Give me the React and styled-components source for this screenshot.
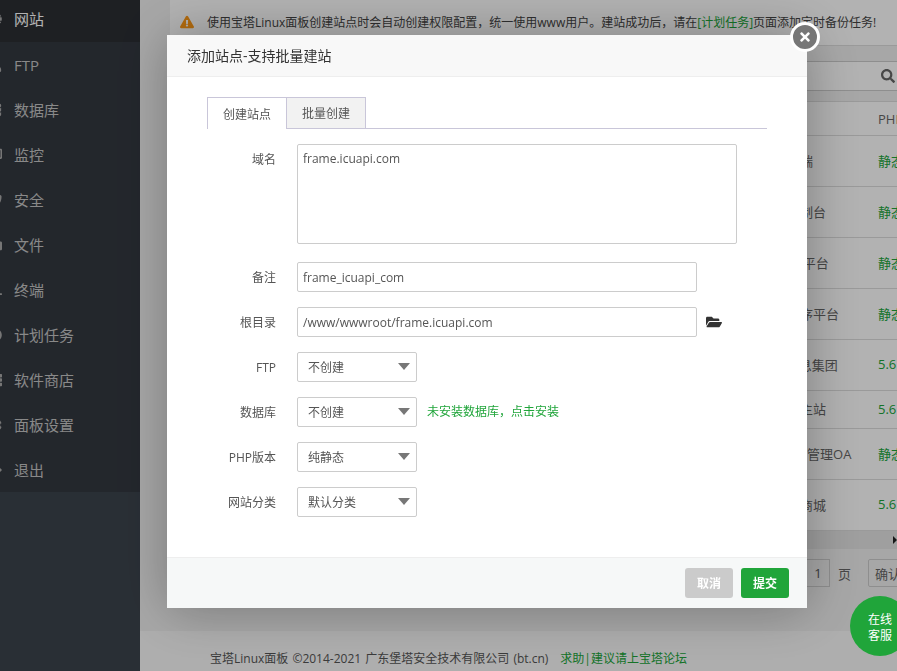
import styled, { createGlobalStyle } from "styled-components";
import {
  FaGlobe, FaUser, FaDatabase, FaDesktop, FaShieldAlt, FaFolder, FaTerminal, FaClock, FaTh, FaCog, FaSignOutAlt,
  FaExclamationTriangle, FaSearch, FaFolderOpen, FaTimes,
} from "react-icons/fa";

const GlobalStyle = createGlobalStyle`
  html, body { margin: 0; height: 100%; overflow: hidden; }
  body { font-family: "Open Sans", "Noto Sans CJK SC", sans-serif; font-size: 13px; color: #666; }
  * { box-sizing: border-box; }
`;

const Page = styled.div`
  display: flex;
  width: 897px;
  height: 671px;
  overflow: hidden;
  background: #f0f0f0;
`;

const Sidebar = styled.aside`
  width: 140px;
  flex: none;
  background: #3c444d;
`;

const Menu = styled.ul`
  list-style: none;
  margin: -3px 0 0;
  padding: 0;
  background: #333840;
`;

const MenuItem = styled.li`
  display: flex;
  align-items: center;
  gap: 12px;
  height: 45px;
  padding-bottom: ${(p) => (p.$active ? 2 : 0)}px;
  margin-left: -12px;
  font-size: 15px;
  color: ${(p) => (p.$active ? "#fff" : "#c4c4c4")};
  background: ${(p) => (p.$active ? "#2b2e33" : "transparent")};
  svg { width: 14px; height: 14px; color: #aaa; flex: none; }
`;

const Main = styled.main`
  flex: 1;
  min-width: 0;
  display: flex;
  flex-direction: column;
`;

const Content = styled.div`
  margin-left: 15px;
  padding-left: 15px;
  height: 603px;
  flex: none;
  background: #f0f0f0;
  display: flex;
  flex-direction: column;
`;

const Notice = styled.div`
  height: 46px;
  flex: none;
  display: flex;
  align-items: center;
  gap: 13px;
  padding: 0 0 2px 10px;
  background: #fff;
  border-bottom: 1px solid #ddd;
  color: #444;
  font-size: 12px;
  white-space: nowrap;
  svg { width: 14px; height: 14px; color: #ff9a16; flex: none; }
  a { color: #20a53a; }
`;

const Toolbar = styled.div`
  flex: none;
  display: flex;
  justify-content: flex-end;
  margin-top: 15px;
  height: 30px;
  background: #fff;
  border-top: 1px solid #ccc;
  border-bottom: 1px solid #ccc;
  align-items: center;
  padding-right: 2px;
  svg { width: 14px; height: 14px; color: #666; }
`;

const Table = styled.div`
  margin-top: 10px;
  border-top: 1px solid #ddd;
  background: #fff;
  flex: none;
`;

const Row = styled.div`
  display: grid;
  grid-template-columns: 591px 117px 100px;
  align-items: center;
  height: ${(p) => p.$h}px;
  padding-bottom: 2px;
  border-bottom: 1px solid #ddd;
  white-space: nowrap;
`;

const NameCell = styled.div`
  grid-column: 2;
  color: #666;
`;

const PhpCell = styled.div`
  grid-column: 3;
  margin-top: ${(p) => (p.$head ? 2 : 0)}px;
  color: ${(p) => (p.$head ? "#666" : "#20a53a")};
`;

const ScrollTrack = styled.div`
  height: 18px;
  flex: none;
  background: #e4e4e4;
  display: flex;
  align-items: center;
  justify-content: flex-end;
  &::after {
    content: "";
    border-left: 4px solid #222;
    border-top: 4px solid transparent;
    border-bottom: 4px solid transparent;
  }
`;

const Pager = styled.div`
  display: flex;
  align-items: center;
  padding: 10px 0 0 637px;
  color: #666;
`;

const PageInput = styled.div`
  width: 23px;
  height: 28px;
  flex: none;
  border: 1px solid #ccc;
  border-left: none;
  display: flex;
  align-items: center;
  justify-content: center;
  color: #555;
`;

const PageWord = styled.span`
  flex: none;
  margin: 0 17px 0 8px;
`;

const ConfirmBtn = styled.div`
  width: 60px;
  height: 28px;
  padding-left: 6px;
  border: 1px solid #ccc;
  border-radius: 2px;
  display: flex;
  align-items: center;
  flex: none;
  white-space: nowrap;
`;

const Footer = styled.footer`
  margin-top: 28px;
  height: 40px;
  flex: none;
  background: #f9f9f9;
  padding: 18px 0 0 70px;
  font-size: 12px;
  word-spacing: 1px;
  color: #555;
  white-space: nowrap;
  a { color: #20a53a; margin-left: 12px; }
`;

const Shade = styled.div`
  position: fixed;
  inset: 0;
  background: rgba(0, 0, 0, 0.3);
`;

const Modal = styled.section`
  position: fixed;
  left: 167px;
  top: 35px;
  width: 640px;
  height: 573px;
  background: #fff;
  box-shadow: 1px 1px 50px rgba(0, 0, 0, 0.3);
  display: flex;
  flex-direction: column;
`;

const ModalTitle = styled.header`
  height: 42px;
  flex: none;
  padding: 0 0 2px 20px;
  display: flex;
  align-items: center;
  background: #f8f8f8;
  border-bottom: 1px solid #eee;
  color: #333;
  font-size: 14px;
`;

const CloseBtn = styled.button`
  position: absolute;
  right: -13px;
  top: -13px;
  width: 30px;
  height: 30px;
  padding: 0;
  border: 3px solid #fff;
  border-radius: 50%;
  background: #777;
  color: #fff;
  display: flex;
  align-items: center;
  justify-content: center;
  svg { width: 14px; height: 14px; }
`;

const ModalBody = styled.div`
  flex: 1;
  padding: 20px 40px 0;
`;

const Tabs = styled.div`
  display: flex;
  height: 32px;
  border-bottom: 1px solid #c9c6d9;
`;

const Tab = styled.div`
  width: ${(p) => p.$w}px;
  height: 32px;
  display: flex;
  align-items: center;
  justify-content: center;
  font-size: 12px;
  color: #555;
  border: 1px solid #c9c6d9;
  background: ${(p) => (p.$active ? "#fff" : "#f2f2f2")};
  border-bottom: ${(p) => (p.$active ? "none" : "1px solid #c9c6d9")};
  border-left: ${(p) => (p.$active ? "1px solid #c9c6d9" : "none")};
`;

const Form = styled.div`
  display: flex;
  flex-direction: column;
  gap: 15px;
  margin-top: 15px;
`;

const Field = styled.div`
  display: flex;
  align-items: flex-start;
  min-height: 30px;
  gap: 10px;
`;

const Label = styled.label`
  width: 69px;
  height: 30px;
  margin-right: 11px;
  flex: none;
  text-align: right;
  line-height: 31px;
  font-size: 12px;
  color: #555;
`;

const TextInput = styled.input`
  width: 400px;
  height: 30px;
  padding: 0 5px;
  border: 1px solid #ccc;
  border-radius: 2px;
  font: 12px "Open Sans", "Noto Sans CJK SC", sans-serif;
  color: #555;
  outline: none;
`;

const TextArea = styled.textarea`
  display: block;
  width: 440px;
  height: 100px;
  margin-bottom: 3px;
  padding: 5px;
  border: 1px solid #ccc;
  border-radius: 2px;
  font: 12px/17px "Open Sans", "Noto Sans CJK SC", sans-serif;
  color: #555;
  outline: none;
  resize: none;
`;

const SelectBox = styled.div`
  position: relative;
  width: 120px;
  height: 30px;
  padding-left: 10px;
  display: flex;
  align-items: center;
  border: 1px solid #ccc;
  border-radius: 2px;
  font-size: 12px;
  color: #555;
  &::after {
    content: "";
    position: absolute;
    right: 6px;
    top: 10px;
    border-top: 7px solid #777;
    border-left: 6px solid transparent;
    border-right: 6px solid transparent;
  }
`;

const FolderBtn = styled.span`
  display: flex;
  align-items: center;
  height: 30px;
  margin-left: -1px;
  color: #333;
  svg { width: 16px; height: 16px; }
`;

const InstallLink = styled.a`
  line-height: 30px;
  font-size: 12px;
  color: #20a53a;
`;

const ModalFoot = styled.div`
  height: 51px;
  flex: none;
  display: flex;
  justify-content: flex-end;
  align-items: flex-start;
  gap: 8px;
  padding: 10px 18px 0 0;
  background: #f6f8f8;
  border-top: 1px solid #eee;
`;

const FootBtn = styled.button`
  width: 48px;
  height: 30px;
  padding: 0;
  border: none;
  border-radius: 3px;
  background: ${(p) => (p.$primary ? "#20a53a" : "#cbcbcb")};
  color: #fff;
  font: bold 12px "Open Sans", "Noto Sans CJK SC", sans-serif;
`;

const ChatBubble = styled.div`
  position: fixed;
  left: 850px;
  top: 596px;
  width: 60px;
  height: 60px;
  border-radius: 50%;
  background: #20a53a;
  color: #fff;
  font-size: 12px;
  line-height: 16px;
  padding: 16px 0 0 18px;
`;

const menu = [
  [FaGlobe, "网站"], [FaUser, "FTP"], [FaDatabase, "数据库"], [FaDesktop, "监控"], [FaShieldAlt, "安全"],
  [FaFolder, "文件"], [FaTerminal, "终端"], [FaClock, "计划任务"], [FaTh, "软件商店"], [FaCog, "面板设置"], [FaSignOutAlt, "退出"],
];

const sites = [
  ["官网前端", "静态", 51],
  ["项目控制台", "静态", 51],
  ["云SaaS平台", "静态", 51],
  ["云小程序平台", "静态", 51],
  ["ABC信息集团", "5.6", 51],
  ["企业官主站", "5.6", 38],
  ["AIC办公管理OA", "静态", 51],
  ["积分兑商城", "5.6", 51],
];

const selects = [
  ["FTP", "不创建"],
  ["数据库", "不创建", true],
  ["PHP版本", "纯静态"],
  ["网站分类", "默认分类"],
];

export default function App() {
  return (
    <>
      <GlobalStyle />
      <Page>
        <Sidebar>
          <Menu>
            {menu.map(([Icon, name], i) => (
              <MenuItem key={name} $active={i === 0}>
                <Icon />
                {name}
              </MenuItem>
            ))}
          </Menu>
        </Sidebar>
        <Main>
          <Content>
            <Notice>
              <FaExclamationTriangle />
              <span>
                使用宝塔Linux面板创建站点时会自动创建权限配置，统一使用www用户。建站成功后，请在<a>[计划任务]</a>页面添加定时备份任务!
              </span>
            </Notice>
            <Toolbar>
              <FaSearch />
            </Toolbar>
            <Table>
              <Row $h={34}>
                <PhpCell $head>PHP</PhpCell>
              </Row>
              {sites.map(([name, php, h]) => (
                <Row key={name} $h={h}>
                  <NameCell>{name}</NameCell>
                  <PhpCell>{php}</PhpCell>
                </Row>
              ))}
            </Table>
            <ScrollTrack />
            <Pager>
              <PageInput>1</PageInput>
              <PageWord>页</PageWord>
              <ConfirmBtn>确认</ConfirmBtn>
            </Pager>
          </Content>
          <Footer>
            宝塔Linux面板 ©2014-2021 广东堡塔安全技术有限公司 (bt.cn)
            <a>求助|建议请上宝塔论坛</a>
          </Footer>
        </Main>
      </Page>
      <Shade />
      <Modal>
        <ModalTitle>添加站点-支持批量建站</ModalTitle>
        <CloseBtn>
          <FaTimes />
        </CloseBtn>
        <ModalBody>
          <Tabs>
            <Tab $w={80} $active>创建站点</Tab>
            <Tab $w={79}>批量创建</Tab>
          </Tabs>
          <Form>
            <Field>
              <Label>域名</Label>
              <TextArea defaultValue="frame.icuapi.com" />
            </Field>
            <Field>
              <Label>备注</Label>
              <TextInput defaultValue="frame_icuapi_com" />
            </Field>
            <Field>
              <Label>根目录</Label>
              <TextInput defaultValue="/www/wwwroot/frame.icuapi.com" />
              <FolderBtn>
                <FaFolderOpen />
              </FolderBtn>
            </Field>
            {selects.map(([label, value, hint]) => (
              <Field key={label}>
                <Label>{label}</Label>
                <SelectBox>{value}</SelectBox>
                {hint && <InstallLink>未安装数据库，点击安装</InstallLink>}
              </Field>
            ))}
          </Form>
        </ModalBody>
        <ModalFoot>
          <FootBtn>取消</FootBtn>
          <FootBtn $primary>提交</FootBtn>
        </ModalFoot>
      </Modal>
      <ChatBubble>
        在线
        <br />
        客服
      </ChatBubble>
    </>
  );
}
